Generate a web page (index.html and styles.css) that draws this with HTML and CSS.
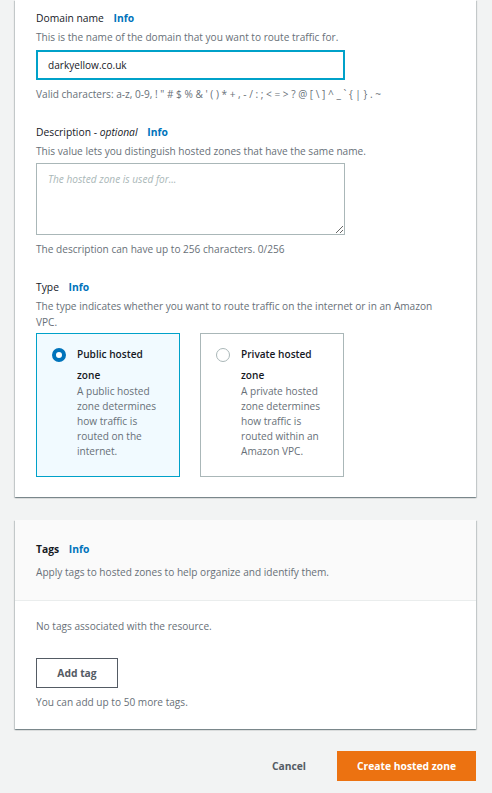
FILE: index.html
```html
<!DOCTYPE html>
<html>
<head>
<meta charset="utf-8">
<link rel="stylesheet" href="styles.css">
</head>
<body>
<div class="page">
  <section class="card card-main">
    <div class="field field-domain">
      <div class="label">Domain name <a class="info">Info</a></div>
      <div class="hint">This is the name of the domain that you want to route traffic for.</div>
      <div class="input">darkyellow.co.uk</div>
      <div class="hint hint-after">Valid characters: a-z, 0-9, ! " # $ % &amp; ' ( ) * + , - / : ; &lt; = &gt; ? @ [ \ ] ^ _ ` { | } . ~</div>
    </div>
    <div class="field field-desc">
      <div class="label">Description - <i>optional</i> <a class="info">Info</a></div>
      <div class="hint">This value lets you distinguish hosted zones that have the same name.</div>
      <textarea class="textarea" placeholder="The hosted zone is used for..."></textarea>
      <div class="hint hint-after">The description can have up to 256 characters. 0/256</div>
    </div>
    <div class="field field-type">
      <div class="label">Type <a class="info">Info</a></div>
      <div class="hint hint-type">The type indicates whether you want to route traffic on the internet or in an Amazon VPC.</div>
      <div class="tiles">
        <div class="tile tile-selected">
          <span class="radio radio-on"></span>
          <div class="tile-body">
            <div class="tile-label">Public hosted zone</div>
            <div class="tile-desc">A public hosted zone determines how traffic is routed on the internet.</div>
          </div>
        </div>
        <div class="tile">
          <span class="radio"></span>
          <div class="tile-body">
            <div class="tile-label">Private hosted zone</div>
            <div class="tile-desc">A private hosted zone determines how traffic is routed within an Amazon VPC.</div>
          </div>
        </div>
      </div>
    </div>
  </section>

  <section class="card card-tags">
    <div class="tags-head">
      <div class="label label-bold">Tags <a class="info">Info</a></div>
      <div class="hint hint-tags">Apply tags to hosted zones to help organize and identify them.</div>
    </div>
    <div class="tags-body">
      <div class="hint">No tags associated with the resource.</div>
      <button class="btn-normal">Add tag</button>
      <div class="hint">You can add up to 50 more tags.</div>
    </div>
  </section>

  <div class="actions">
    <button class="btn-link">Cancel</button>
    <button class="btn-primary">Create hosted zone</button>
  </div>
</div>
</body>
</html>
```

FILE: styles.css
```css
* { box-sizing: border-box; }
html, body {
  margin: 0;
  padding: 0;
  background: #f2f3f3;
}
body {
  font-family: "Open Sans", "Liberation Sans", sans-serif;
  font-size: 10.1px;
  color: #16191f;
  width: 492px;
  height: 793px;
  overflow: hidden;
}
.page {
  padding: 0 16px 0 15px;
}
.card {
  background: #fff;
  box-shadow: 0 1px 1px 0 rgba(0, 28, 36, 0.3), 1px 1px 1px 0 rgba(0, 28, 36, 0.15), -1px 1px 1px 0 rgba(0, 28, 36, 0.15);
}
.card-main {
  padding: 10px 21px 20px 21px;
}
.label {
  line-height: 16px;
  height: 16px;
  color: #16191f;
  font-size: 10.3px;
}
.label i { font-style: italic; }
.label-bold { font-weight: 700; }
.info {
  color: #0073bb;
  font-weight: 700;
  margin-left: 7px;
}
.hint {
  color: #687078;
  line-height: 16px;
  margin-top: 3px;
}
.hint-after { margin-top: 6px; }
.input {
  margin-top: 5px;
  width: 309px;
  height: 30px;
  border: 2px solid #00a1c9;
  padding: 0 10px;
  line-height: 26px;
  color: #16191f;
}
.field-desc { margin-top: 22px; }
.field-type { margin-top: 22px; }
.textarea {
  display: block;
  margin-top: 4px;
  width: 309px;
  height: 72px;
  border: 1px solid #aab7b8;
  border-radius: 0;
  padding: 8px 11px;
  font-family: inherit;
  font-size: 10.1px;
  resize: vertical;
  outline: none;
}
.textarea::placeholder {
  color: #aab7b8;
  font-style: italic;
}
.hint-type { margin-top: 3px; }
.tiles {
  display: flex;
  gap: 20px;
  margin-top: 3px;
}
.tile {
  width: 144px;
  height: 144px;
  border: 1px solid #aab7b8;
  display: flex;
  padding: 10px 14px 0 15px;
  background: #fff;
}
.tile-selected {
  background: #f1faff;
  border-color: #00a1c9;
}
.radio {
  flex: none;
  width: 14px;
  height: 14px;
  border-radius: 50%;
  border: 1px solid #aab7b8;
  background: #fff;
  margin-top: 4px;
  margin-right: 11px;
}
.radio-on {
  border: 4px solid #0073bb;
}
.tile-label {
  line-height: 21px;
  font-weight: 600;
  color: #16191f;
  width: 86px;
}
.tile-desc {
  color: #687078;
  line-height: 15px;
  margin-top: -2px;
  width: 88px;
}
.card-tags {
  margin-top: 23px;
}
.tags-head {
  background: #fafafa;
  border-bottom: 1px solid #eaeded;
  padding: 21px 21px 20px 21px;
}
.hint-tags { margin-top: 7px; }
.tags-body {
  padding: 17px 21px 19px 21px;
}
.tags-body .hint { margin-top: 0; }
.btn-normal {
  display: block;
  margin-top: 24px;
  margin-bottom: 6px;
  width: 82px;
  height: 30px;
  border: 1px solid #545b64;
  background: #fff;
  color: #545b64;
  font-family: inherit;
  font-size: 10.3px;
  font-weight: 700;
  padding: 0;
}
.actions {
  display: flex;
  justify-content: flex-end;
  align-items: center;
  margin-top: 22px;
  gap: 31px;
}
.btn-link {
  border: none;
  background: none;
  color: #545b64;
  font-family: inherit;
  font-size: 10.3px;
  font-weight: 700;
  padding: 0;
}
.btn-primary {
  width: 139px;
  height: 30px;
  border: none;
  background: #ec7211;
  color: #fff;
  font-family: inherit;
  font-size: 10.3px;
  font-weight: 700;
  padding: 0;
}
```
